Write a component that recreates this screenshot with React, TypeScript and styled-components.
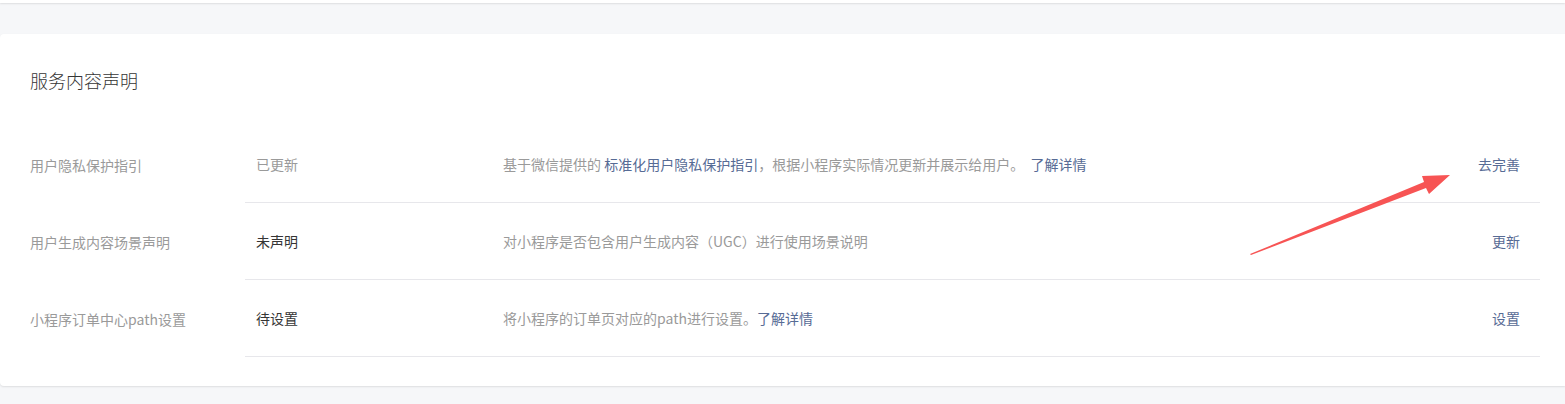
import React from 'react';
import styled, { createGlobalStyle } from 'styled-components';

const GlobalStyle = createGlobalStyle`
  body {
    margin: 0;
    background: #f6f7f9;
    font-family: "Noto Sans CJK SC", "Noto Sans", sans-serif;
    font-size: 14px;
    color: #353535;
  }
`;

const Page = styled.div`
  width: 1565px;
  height: 404px;
  overflow: hidden;
`;

const TopCard = styled.div`
  height: 3px;
  background: #fff;
  box-shadow: 0 1px 2px rgba(0, 0, 0, 0.1);
`;

const Card = styled.section`
  position: relative;
  margin-top: 31px;
  background: #fff;
  border-radius: 4px 0 0 4px;
  box-shadow: 0 1px 2px rgba(0, 0, 0, 0.1);
  padding: 34px 0 29px;
`;

const Title = styled.h3`
  margin: 0 0 34px 30px;
  font-size: 18px;
  font-weight: 300;
  line-height: 24px;
  color: #353535;
`;

const Row = styled.div`
  display: flex;
  height: 77px;
`;

const Label = styled.div`
  width: 215px;
  padding-left: 30px;
  display: flex;
  align-items: center;
  color: #9a9a9a;
`;

const Body = styled.div`
  flex: 1;
  margin-right: 25px;
  display: flex;
  align-items: center;
  border-bottom: 1px solid #e7e7eb;
`;

const Status = styled.div<{ $muted?: boolean }>`
  width: 247px;
  padding-left: 11px;
  color: ${p => (p.$muted ? '#9a9a9a' : '#353535')};
`;

const Desc = styled.div`
  flex: 1;
  color: #9a9a9a;
`;

const Link = styled.a`
  color: #576b95;
  text-decoration: none;
  cursor: pointer;
`;

const Action = styled(Link)`
  padding-right: 20px;
`;

const Arrow = styled.svg`
  position: absolute;
  left: 0;
  top: 0;
  pointer-events: none;
`;

type Item = {
  label: string;
  status: string;
  muted?: boolean;
  desc: React.ReactNode;
  action: string;
};

const items: Item[] = [
  {
    label: '用户隐私保护指引',
    status: '已更新',
    muted: true,
    desc: (
      <>
        基于微信提供的 <Link>标准化用户隐私保护指引</Link>，根据小程序实际情况更新并展示给用户。&nbsp;{' '}
        <Link>了解详情</Link>
      </>
    ),
    action: '去完善'
  },
  {
    label: '用户生成内容场景声明',
    status: '未声明',
    desc: '对小程序是否包含用户生成内容（UGC）进行使用场景说明',
    action: '更新'
  },
  {
    label: '小程序订单中心path设置',
    status: '待设置',
    desc: (
      <>
        将小程序的订单页对应的path进行设置。<Link>了解详情</Link>
      </>
    ),
    action: '设置'
  }
];

function App() {
  return (
    <Page>
      <GlobalStyle />
      <TopCard />
      <Card>
        <Title>服务内容声明</Title>
        {items.map(item => (
          <Row key={item.label}>
            <Label>{item.label}</Label>
            <Body>
              <Status $muted={item.muted}>{item.status}</Status>
              <Desc>{item.desc}</Desc>
              <Action>{item.action}</Action>
            </Body>
          </Row>
        ))}
        <Arrow width="1565" height="360">
          <polygon
            fill="#f75454"
            points="1250,220 1424,148 1422,142 1450,141 1429,160 1426,154 1251,221"
          />
        </Arrow>
      </Card>
    </Page>
  );
}

export default App;
